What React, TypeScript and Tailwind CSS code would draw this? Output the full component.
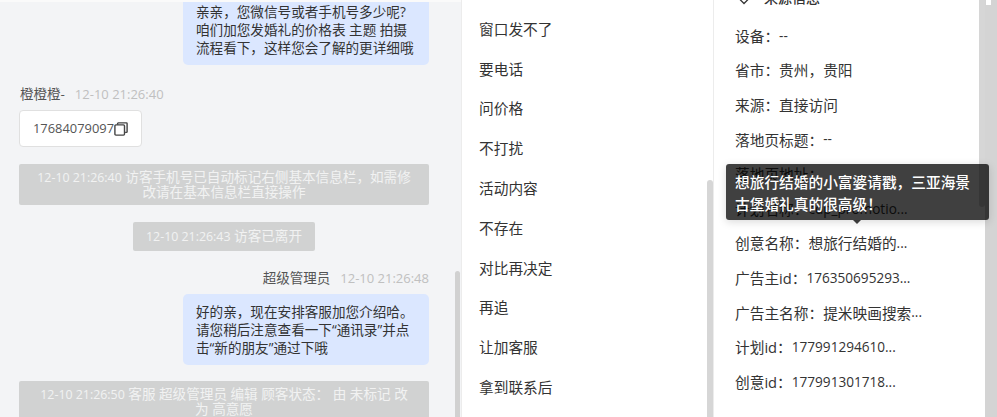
const FONT = "font-['Open_Sans','Noto_Sans_CJK_SC',sans-serif]";

const quickReplies = [
  "窗口发不了",
  "要电话",
  "问价格",
  "不打扰",
  "活动内容",
  "不存在",
  "对比再决定",
  "再追",
  "让加客服",
  "拿到联系后",
];

// third column is the part set in latin digits, a bit smaller than the cjk text
const sourceInfo = [
  ["设备：", "", "--"],
  ["省市：", "贵州，贵阳", ""],
  ["来源：", "直接访问", ""],
  ["落地页标题：", "", "--"],
  ["落地页地址：", "", ""],
  ["计划名称：", "", "cdp_promotio..."],
  ["创意名称：", "想旅行结婚的", "..."],
  ["广告主id：", "", "176350695293..."],
  ["广告主名称：", "提米映画搜索", "..."],
  ["计划id：", "", "177991294610..."],
  ["创意id：", "", "177991301718..."],
];

function CopyIcon() {
  return (
    <svg width="14" height="14" viewBox="0 0 14 14" fill="none" stroke="#444" strokeWidth="1.4" className="shrink-0">
      <path d="M3.6 2.8V1.6c0-.4.2-.7.7-.7h8.1c.4 0 .7.3.7.7v8.1c0 .4-.3.7-.7.7h-1.3" />
      <rect x="0.9" y="2.9" width="9.6" height="10.2" rx="1" />
    </svg>
  );
}

function Bubble({ text }: { text: string }) {
  return (
    <div className="ml-auto w-[246px] rounded-[5px] bg-[#dbe7ff] px-[13px] py-[8.5px] text-[13.6px] leading-[18px] text-[#333]">
      {text}
    </div>
  );
}

function SystemNote({ time, text, className }: { time: string; text: string; className: string }) {
  return (
    <div className={`rounded-[2px] bg-[#d1d2d2] text-center text-[13.6px] leading-[14px] text-[#f2f2f2] ${className}`}>
      <span className="text-[12.4px]">{time}</span> {text}
    </div>
  );
}

function ChatPanel() {
  return (
    <div className="relative h-full w-[461px] shrink-0 overflow-hidden bg-[#f3f4f6]">
      <div className="flex w-[429px] flex-col pl-[19px]">
        <div className="-mt-1.5">
          <Bubble text="亲亲，您微信号或者手机号多少呢?咱们加您发婚礼的价格表 主题 拍摄流程看下，这样您会了解的更详细哦" />
        </div>
        <div className="mt-[20px] flex items-center gap-[10px] pl-px text-[13px] leading-[18px]">
          <span className="text-[13.5px] text-[#555]">橙橙橙-</span>
          <span className="text-[#c0c0c0]">12-10 21:26:40</span>
        </div>
        <div className="mt-[7px] flex h-[37px] w-[123px] items-center rounded-[4px] border border-[#e0e0e0] bg-white pl-[13px] text-[12.9px] text-[#555]">
          17684079097
          <CopyIcon />
        </div>
        <div className="mt-[17px]">
          <SystemNote
            className="px-[14px] py-[6px]"
            time="12-10 21:26:40"
            text="访客手机号已自动标记右侧基本信息栏，如需修改请在基本信息栏直接操作"
          />
        </div>
        <div className="mt-[17px]">
          <SystemNote className="mx-auto w-[182px] px-2 py-[7px]" time="12-10 21:26:43" text="访客已离开" />
        </div>
        <div className="mt-[18px] flex items-center justify-end gap-[10px] text-[13px] leading-[18px]">
          <span className="text-[13.5px] text-[#555]">超级管理员</span>
          <span className="text-[#c0c0c0]">12-10 21:26:48</span>
        </div>
        <div className="mt-[7px]">
          <Bubble text="好的亲，现在安排客服加您介绍哈。请您稍后注意查看一下“通讯录”并点击“新的朋友”通过下哦" />
        </div>
        <div className="mt-[16px]">
          <SystemNote
            className="px-[20px] py-[6px]"
            time="12-10 21:26:50"
            text="客服 超级管理员 编辑 顾客状态： 由 未标记 改为 高意愿"
          />
        </div>
      </div>
      <div className="absolute inset-x-0 top-0 h-[2px] bg-[#fafafa]" />
      <div className="absolute right-px top-[271px] h-[160px] w-[5px] rounded-full bg-[#d1d1d1]" />
    </div>
  );
}

function QuickReplyPanel() {
  return (
    <div className="relative h-full w-[252px] shrink-0 overflow-hidden border-l border-[#ececec] bg-white pt-[9px] pl-[17px]">
      {quickReplies.map((item) => (
        <div key={item} className="flex h-[39.8px] items-center text-[14.7px] text-[#333]">
          {item}
        </div>
      ))}
      <div className="absolute right-0 top-[180px] h-[260px] w-[6px] rounded-full bg-[#d6d6d6]" />
    </div>
  );
}

function SourcePanel() {
  return (
    <div className="relative h-full w-[272px] shrink-0 overflow-hidden border-l border-[#ececec] bg-white pl-[21px]">
      <div className="-mt-[12px] flex h-[20px] items-center text-sm font-medium text-[#333]">
        <svg width="12" height="8" viewBox="0 0 12 8" fill="none" stroke="#333" strokeWidth="1.3" className="ml-[3px] mr-[14px] mt-[6px]">
          <path d="M1 1.5 6 6.5 11 1.5" />
        </svg>
        来源信息
        <div className="-mt-[8px] ml-[125px] h-[12px] w-[11px] rounded-[2px] border border-[#333]" />
      </div>
      <div className="mt-[10.5px]">
        {sourceInfo.map(([label, value, latin]) => (
          <div key={label} className="flex h-[34.6px] items-center text-[14.7px] text-[#333]">
            {label}
            {value}
            <span className="text-[13.6px]">{latin}</span>
          </div>
        ))}
      </div>
      <div className="absolute right-0 top-0 h-[207px] w-[6px] rounded-b-full bg-[#d6d6d6]" />
    </div>
  );
}

export default function App() {
  return (
    <div className={`relative flex h-[417px] w-[997px] overflow-hidden bg-[#d4d4d4] ${FONT}`}>
      <ChatPanel />
      <QuickReplyPanel />
      <SourcePanel />
      <div className="absolute left-[986px] top-0 h-[5px] w-[5px] bg-white" />
      <div className="absolute left-[726px] top-[164px] h-[56px] w-[263px] rounded-[3px] bg-black/75 py-[7px] pl-[9px] pr-[16px] text-[14.7px] font-medium leading-[22px] text-white shadow-[0_2px_8px_rgba(0,0,0,0.15)]">
        想旅行结婚的小富婆请戳，三亚海景古堡婚礼真的很高级！
        <div className="absolute left-[127px] top-full h-0 w-0 border-x-[4px] border-t-[4px] border-x-transparent border-t-black/75" />
      </div>
    </div>
  );
}
